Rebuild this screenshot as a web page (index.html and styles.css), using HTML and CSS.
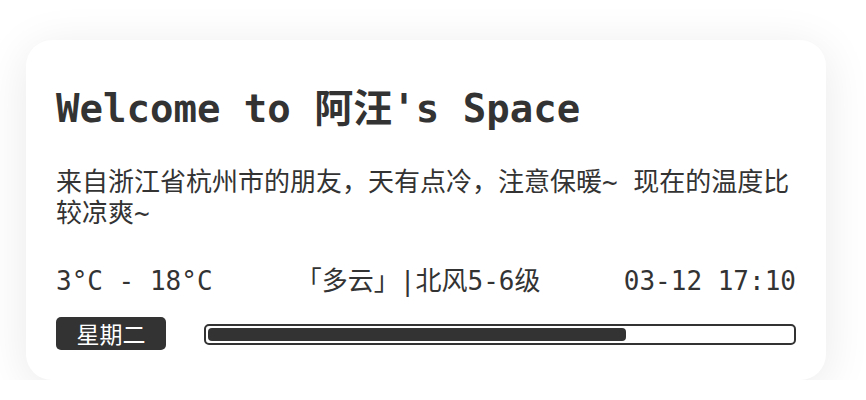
FILE: index.html
```html
<!DOCTYPE html>
<html lang="zh-CN">
<head>
<meta charset="utf-8">
<title>Welcome</title>
<link rel="stylesheet" href="styles.css">
</head>
<body>
<div class="page">
  <section class="card">
    <h1 class="title">Welcome to 阿汪's Space</h1>
    <p class="greeting">来自浙江省杭州市的朋友，天有点冷，注意保暖~ 现在的温度比较凉爽~</p>
    <div class="info">
      <span class="temp">3°C - 18°C</span>
      <span class="weather">「多云」|北风5-6级</span>
      <span class="time">03-12 17:10</span>
    </div>
    <div class="status">
      <span class="badge">星期二</span>
      <div class="bar"><div class="fill" style="width: 71.5%"></div></div>
    </div>
  </section>
</div>
</body>
</html>
```

FILE: styles.css
```css
html, body {
  margin: 0;
  padding: 0;
  background: #ffffff;
}

.page {
  padding: 40px 40px 0 26px;
}

.card {
  width: 800px;
  box-sizing: border-box;
  background: #ffffff;
  border-radius: 26px;
  box-shadow: 0 8px 48px rgba(0, 0, 0, 0.09);
  padding: 44.5px 30px 30px;
  color: #333333;
  font-family: "DejaVu Sans Mono", "Noto Sans CJK SC", monospace;
}

.title {
  margin: 0;
  font-size: 39px;
  line-height: 48px;
  font-weight: bold;
}

.greeting {
  margin: 34px 0 0;
  font-size: 26px;
  line-height: 31px;
}

.info {
  margin-top: 37.5px;
  display: flex;
  justify-content: space-between;
  align-items: center;
  font-size: 26px;
  line-height: 30px;
}

.status {
  margin-top: 21px;
  display: flex;
  align-items: center;
  gap: 38px;
}

.badge {
  flex: none;
  width: 110px;
  height: 33px;
  box-sizing: border-box;
  background: #333333;
  color: #ffffff;
  border-radius: 5px;
  font-family: "Noto Sans CJK SC", sans-serif;
  font-size: 23px;
  line-height: 33px;
  text-align: center;
}

.bar {
  flex: 1;
  height: 21px;
  box-sizing: border-box;
  border: 2px solid #333333;
  border-radius: 5px;
  padding: 2px;
  margin-top: 1px;
}

.fill {
  height: 100%;
  background: #333333;
  border-radius: 4px;
}
```
